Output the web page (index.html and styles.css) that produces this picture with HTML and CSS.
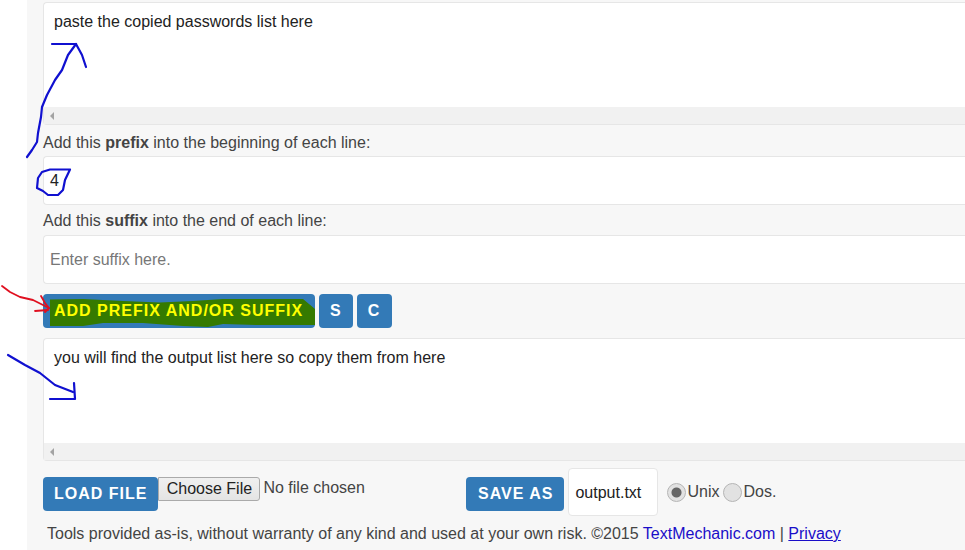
FILE: index.html
```html
<!DOCTYPE html>
<html lang="en">
<head>
    <meta charset="UTF-8">
    <title>Add Prefix and Suffix</title>
    <link rel="stylesheet" href="styles.css">
</head>
<body>
    <div class="panel">
        <div class="box">
            <div class="box-text">paste the copied passwords list here</div>
            <div class="scrollbar"><span class="scroll-arrow"></span></div>
        </div>

        <div class="label">Add this <b>prefix</b> into the beginning of each line:</div>
        <div class="field">4</div>

        <div class="label label-second">Add this <b>suffix</b> into the end of each line:</div>
        <div class="field placeholder">Enter suffix here.</div>

        <div class="actions">
            <a class="btn btn-main">
                <svg class="marker" width="272" height="34" viewBox="0 0 272 34">
                    <path d="M7 5.5 L40 5 L80 7 L117 8.5 L150 7 L180 5 L260 5 L272 15 L272 31 L215 31 L180 30 L165 33 L140 32 L100 29 L60 29 L40 32 L7 32 Z" fill="#357a00"/>
                </svg>
                <span>ADD PREFIX AND/OR SUFFIX</span>
            </a>
            <a class="btn">S</a>
            <a class="btn btn-c">C</a>
        </div>

        <div class="box">
            <div class="box-text">you will find the output list here so copy them from here</div>
            <div class="scrollbar"><span class="scroll-arrow"></span></div>
        </div>

        <div class="bottom">
            <div class="file-group">
                <a class="btn">LOAD FILE</a>
                <span class="file-button">Choose File</span>
                <span class="file-name">No file chosen</span>
            </div>
            <a class="btn btn-save">SAVE AS</a>
            <div class="save-name">output.txt</div>
            <div class="radios">
                <span class="radio radio-on"></span>Unix
                <span class="radio radio-second"></span>Dos.
            </div>
        </div>

        <div class="footer">Tools provided as-is, without warranty of any kind and used at your own risk. ©2015 <a class="site">TextMechanic.com</a> | <a class="privacy">Privacy</a></div>
    </div>

    <!-- hand drawn notes on top of the screenshot -->
    <svg class="notes" width="965" height="550" viewBox="0 0 965 550" fill="none">
        <g stroke="#1010d0" stroke-width="2.2" stroke-linejoin="round" stroke-linecap="round">
            <path d="M27 157 L32 150 L37 142 L38 133 L41 117 L42 107 L47 95 L55 80 L62 70 L68 55 L76 44"/>
            <path d="M52 44 L76 44 L82 55 L86 67"/>
            <path d="M70 169.5 L50 169.5 L42 172 L38 178 L37 188 L43 191 L48 195 L58 195 L63 190 L65 180 Z"/>
            <path d="M8 355 L25 365 L40 373 L55 385 L73 392"/>
            <path d="M74 383 L75 399 L50 399"/>
        </g>
        <g stroke="#e01020" stroke-width="1.8" stroke-linecap="round" stroke-linejoin="round">
            <path d="M2 286 L10 292 L20 297 L33 300 L49 308"/>
            <path d="M41 296 L45 303 L49 308 L45 312"/>
            <path d="M35 311 L48 310"/>
        </g>
    </svg>
</body>
</html>
```

FILE: styles.css
```css
body {
    margin: 0;
    height: 550px;
    overflow: hidden;
    position: relative;
    background: #fff;
    font-family: "Liberation Sans", Arial, sans-serif;
    font-size: 16px;
    color: #444;
}
.panel {
    margin-left: 27px;
    height: 550px;
    box-sizing: border-box;
    padding: 2px 0 0 16px;
    background: #f7f7f7;
}
.box {
    height: 123px;
    box-sizing: border-box;
    display: flex;
    flex-direction: column;
    background: #fff;
    border: 1px solid #e6e6e6;
    border-right: none;
    border-radius: 4px 0 0 4px;
}
.box-text {
    flex: 1;
    padding: 10px;
    line-height: 18px;
    color: #222;
}
.scrollbar {
    height: 17px;
    display: flex;
    align-items: center;
    background: #f1f1f1;
}
.scroll-arrow {
    margin-left: 6px;
    border-style: solid;
    border-width: 4px 4px 4px 0;
    border-color: transparent #a3a3a3 transparent transparent;
}
.label {
    height: 31px;
    line-height: 36px;
}
.label-second {
    height: 30px;
    line-height: 31px;
}
.field {
    height: 49px;
    box-sizing: border-box;
    padding-left: 6px;
    line-height: 47px;
    color: #222;
    background: #fff;
    border: 1px solid #e6e6e6;
    border-right: none;
    border-radius: 4px 0 0 4px;
}
.placeholder {
    color: #777;
}
.actions {
    display: flex;
    gap: 4px;
    margin: 10px 0;
}
.btn {
    position: relative;
    display: block;
    height: 34px;
    padding: 0 11px;
    line-height: 34px;
    font-weight: bold;
    letter-spacing: 1px;
    color: #fff;
    background: #337ab7;
    border-radius: 4px;
}
.btn-c {
    padding: 0 12px 0 11px;
}
.btn-save {
    padding: 0 11px 0 12px;
}
.btn-main {
    width: 272px;
    box-sizing: border-box;
    color: #ffff00;
}
.btn-main span {
    position: relative;
}
.marker {
    position: absolute;
    top: 0;
    left: 0;
}
.bottom {
    display: flex;
    align-items: flex-start;
    margin-top: 7px;
}
.bottom .btn {
    margin-top: 9px;
}
.file-group {
    display: flex;
    align-items: flex-start;
    width: 423px;
}
.file-button {
    box-sizing: border-box;
    width: 102px;
    height: 24px;
    margin-top: 9px;
    line-height: 22px;
    text-align: center;
    color: #222;
    background: linear-gradient(#f0f0f0, #e4e4e4);
    border: 1px solid #aaa;
    border-radius: 0 3px 3px 0;
}
.file-name {
    margin: 9px 0 0 3px;
    line-height: 22px;
}
.save-name {
    box-sizing: border-box;
    width: 90px;
    height: 48px;
    margin-left: 4px;
    padding-left: 6px;
    line-height: 47px;
    color: #222;
    background: #fff;
    border: 1px solid #e6e6e6;
    border-radius: 4px;
}
.radios {
    display: flex;
    align-items: center;
    height: 48px;
    margin-left: 9px;
}
.radio {
    box-sizing: border-box;
    width: 19px;
    height: 19px;
    margin-right: 1px;
    background: #e2e2e2;
    border: 1px solid #b5b5b5;
    border-radius: 50%;
}
.radio-second {
    margin-left: 4px;
}
.radio-on {
    background: radial-gradient(circle, #666 0 4.5px, #e2e2e2 5.5px);
}
.footer {
    margin: 8px 0 0 4px;
    line-height: 20px;
    white-space: nowrap;
}
.site {
    color: #1a0dc8;
}
.privacy {
    color: #1a0dc8;
    text-decoration: underline;
}
.notes {
    position: absolute;
    top: 0;
    left: 0;
}
```
